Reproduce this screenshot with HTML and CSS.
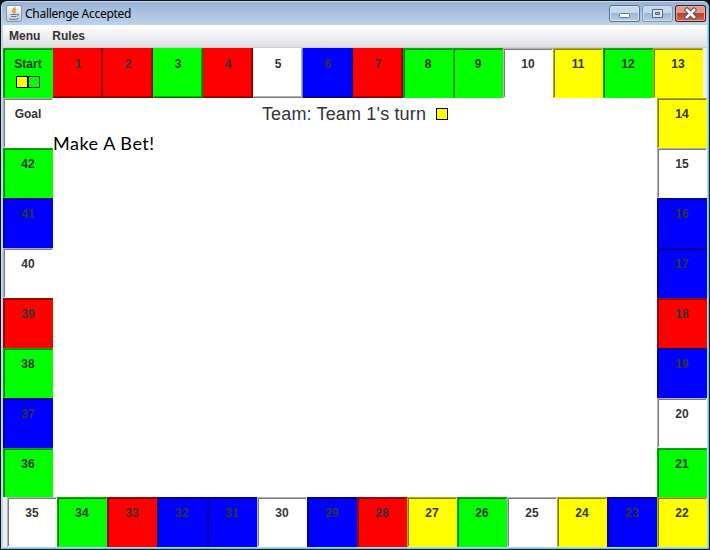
FILE: index.html
```html
<!DOCTYPE html>
<html lang="en">
<head>
<meta charset="utf-8">
<title>Challenge Accepted</title>
<link rel="stylesheet" href="styles.css">
</head>
<body>
<div class="window">
  <header class="titlebar">
    <svg class="java" width="16" height="17" viewBox="0 0 16 17">
      <defs><linearGradient id="tile" x2="0" y2="1"><stop offset="0" stop-color="#fff"/><stop offset="1" stop-color="#c3cbd3"/></linearGradient></defs>
      <rect x=".5" y=".5" width="15" height="16" rx="1.500" fill="url(#tile)" stroke="#8997a5"/>
      <path d="M8.800 1.800c1 1.700-3 2.600-2.200 4.400.3.800 1 1.100 1.200 2M10.200 4.200c-2 .9-2 1.600-1.300 2.500.4.600.1 1.200-.4 1.600" fill="none" stroke="#ee8434" stroke-width="1.300"/>
      <path d="M4.500 9.500h6.200M5.100 11.500h5M3 13.800c2.500.8 7 .8 9.700-.2M11 9.200c2-.7 2.200 1.500.1 2" fill="none" stroke="#50799d"/>
    </svg>
    <h1 class="title">Challenge Accepted</h1>
    <div class="controls">
      <svg class="control" viewBox="0 0 31 17"><rect x="10.500" y="8.500" width="10" height="4" rx="1" fill="#fff" stroke="#697482"/></svg>
      <svg class="control control-max" viewBox="0 0 31 17"><path d="M10.500 4.500h10v8h-10z" fill="#dbe4ef" stroke="#596575"/><path d="M13.500 7.500h4v2h-4z" fill="#a9c0dc" stroke="#596575"/></svg>
      <svg class="control control-close" viewBox="0 0 31 17"><path d="M12 5l7 7M19 5l-7 7" stroke="#535866" stroke-width="4.600" stroke-linecap="square"/><path d="M12 5l7 7M19 5l-7 7" stroke="#fff" stroke-width="2.600" stroke-linecap="square"/></svg>
    </div>
  </header>
  <nav class="menubar"><span>Menu</span><span>Rules</span></nav>
  <main class="board">
    <div class="row">
      <div class="tile green">Start<div class="pieces"><i class="piece yellow"></i><i class="piece green"></i></div></div>
      <div class="tile raised red">1</div><div class="tile raised red">2</div><div class="tile raised green">3</div><div class="tile raised red">4</div><div class="tile raised white">5</div><div class="tile raised blue">6</div><div class="tile raised red">7</div><div class="tile green">8</div><div class="tile green">9</div><div class="tile white">10</div><div class="tile yellow">11</div><div class="tile green">12</div><div class="tile yellow">13</div>
    </div>
    <div class="middle">
      <div class="column">
        <div class="tile white">Goal</div><div class="tile green">42</div><div class="tile blue">41</div><div class="tile white">40</div><div class="tile red">39</div><div class="tile green">38</div><div class="tile blue">37</div><div class="tile green">36</div>
      </div>
      <section class="center">
        <div class="turn"><span>Team: Team 1's turn</span><i class="piece yellow"></i></div>
        <p class="bet">Make A Bet!</p>
      </section>
      <div class="column">
        <div class="tile yellow">14</div><div class="tile white">15</div><div class="tile blue">16</div><div class="tile blue">17</div><div class="tile red">18</div><div class="tile blue">19</div><div class="tile white">20</div><div class="tile green">21</div>
      </div>
    </div>
    <div class="row row-bottom">
      <div class="tile white">35</div><div class="tile green">34</div><div class="tile red">33</div><div class="tile blue">32</div><div class="tile blue">31</div><div class="tile white">30</div><div class="tile blue">29</div><div class="tile red">28</div><div class="tile yellow">27</div><div class="tile green">26</div><div class="tile white">25</div><div class="tile yellow">24</div><div class="tile blue">23</div><div class="tile yellow">22</div>
    </div>
  </main>
</div>
</body>
</html>
```
FILE: styles.css
```css
* { box-sizing: border-box; }
body { margin: 0; background: #10151a; overflow: hidden; font-family: "Liberation Sans", Arial, sans-serif; color: #333; }
.window {
  width: 708px; height: 548px; margin: 1px;
  border: 1px solid #c7dcf4; border-right-color: #43d5f5; border-bottom-color: #43d5f5;
  border-radius: 6px 6px 0 0;
  background: #b9d1ea; padding: 0 1px;
  display: flex; flex-direction: column; overflow: hidden;
}
.titlebar {
  height: 23px; flex: none; margin: 0 -1px; padding: 0 2px 0 4px;
  display: flex; align-items: flex-start;
  background: linear-gradient(#98b3d3, #bdd3ec);
}
.java { margin-top: 3px; flex: none; }
.title { margin: 3px 0 0 3px; font: 12px/18px "Segoe UI", "Noto Sans", sans-serif; color: #000; letter-spacing: -.28px; flex: 1; }
.controls { display: flex; gap: 2px; margin-top: 3px; }
.control {
  width: 31px; height: 17px; border-radius: 3px; fill: none;
  background: linear-gradient(#c5d8ec 48%, #9cb8d7 50%, #b8d0ea);
  box-shadow: inset 0 0 0 1px #55708f, inset 0 0 0 2px #dce8f5;
}
.control-max { box-shadow: inset 0 0 0 1px #8199b6, inset 0 0 0 2px #c9dbef; }
.control-close { background: linear-gradient(#dc9b8d 45%, #bd3c26 50%, #cf6b50); box-shadow: inset 0 0 0 1px #4d1620, inset 0 0 0 2px #e8aa9b; }
.menubar {
  height: 23px; flex: none; padding: 0 6px; display: flex; gap: 12px;
  font-size: 12px; font-weight: bold; line-height: 22px;
  background: linear-gradient(#fff, #e0dfe3); border-bottom: 1px solid #ccc;
}
.board { width: 704px; height: 499px; background: #eee; display: flex; flex-direction: column; }
.row { display: flex; height: 50px; flex: none; }
.row-bottom { justify-content: flex-end; }
.middle { display: flex; height: 399px; flex: none; }
.column { width: 50px; height: 399px; overflow: hidden; flex: none; }
.tile {
  width: 50px; height: 50px; flex: none; padding-top: 9px;
  font-size: 12px; font-weight: bold; line-height: 14px; text-align: center;
  background: var(--fill);
  box-shadow: inset 1px 1px var(--mid), inset -1px -1px var(--fill), inset 2px 2px var(--deep);
}
.raised { box-shadow: inset -1px -1px var(--deep), inset 1px 1px var(--fill), inset -2px -2px var(--mid); }
.red { --fill: #f00; --mid: #b20000; --deep: #7c0000; }
.green { --fill: #0f0; --mid: #00b200; --deep: #007c00; }
.blue { --fill: #00f; --mid: #0000b2; --deep: #00007c; }
.yellow { --fill: #ff0; --mid: #b2b200; --deep: #7c7c00; }
.white { --fill: #fff; --mid: #b2b2b2; --deep: #7c7c7c; }
.pieces { display: flex; justify-content: center; margin-top: 5px; }
.piece { width: 12px; height: 12px; border: 1px solid #000; background: var(--fill); }
.center { flex: 1; background: #fff; }
.turn { height: 32px; display: flex; align-items: center; justify-content: center; gap: 10px; font-size: 18px; letter-spacing: .16px; }
.bet { margin: 0; font: 18px/27px "Comic Sans MS", Lato, sans-serif; color: #000; white-space: nowrap; letter-spacing: .52px; }
```
